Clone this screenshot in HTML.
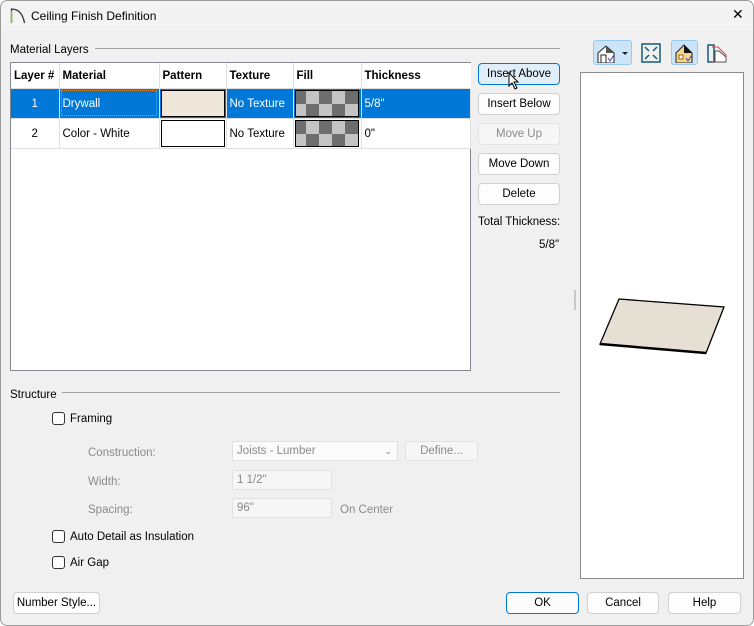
<!DOCTYPE html>
<html><head><style>
*{box-sizing:border-box;margin:0;padding:0}
body{width:754px;height:626px;background:#fff;font-family:"Liberation Sans",sans-serif;font-size:11.5px;color:#000;position:relative;overflow:hidden}
.win{position:absolute;left:0;top:0;width:754px;height:626px;background:#f0f0f0;border-radius:7px;overflow:hidden}
.frame{position:absolute;left:0;top:0;width:754px;height:626px;border:1px solid #9a9a9a;border-radius:7px;pointer-events:none}
.title{position:absolute;left:0;top:0;width:754px;height:31px;background:#f3f3f3}
.a{position:absolute;white-space:nowrap}
.t{margin-top:2px}
.btn{position:absolute;height:22px;background:#fdfdfd;border:1px solid #d0d0d0;border-radius:4px;text-align:center;line-height:21px;font-size:11.5px}
.line{position:absolute;height:1px;background:#a0a0a0}
table{border-collapse:collapse;position:absolute;left:11px;top:63px;background:#fff;table-layout:fixed}
td{border-right:1px solid #e0e0e0;border-bottom:1px solid #e0e0e0;height:29px;padding:1px 3px 0;font-size:11.5px;white-space:nowrap;overflow:hidden}
th{text-align:left;font-weight:bold;height:25px;padding:1px 3px 0;border-right:1px solid #e0e0e0;border-bottom:1px solid #e0e0e0;font-size:11.5px;white-space:nowrap;overflow:hidden}
.sel td{background:#0078d7;color:#fff}
.chk{position:absolute;width:13px;height:13px;border:1px solid #333;border-radius:3px;background:#fff}
.g{color:#8a8a8a}
.box{position:absolute;height:20px;border:1px solid #e0e0e0;background:#f6f6f6;color:#8a8a8a;padding-left:4px;line-height:19px}
.fill{width:64px;height:27px;border:1px solid #000;background:conic-gradient(#c4c4c4 25%,#6e6e6e 0 50%,#c4c4c4 0 75%,#6e6e6e 0) -3px 0/26px 26px}
</style></head><body>
<div class="win">
<div class="title"></div>
<svg class="a" style="left:10px;top:7px" width="16" height="17"><path d="M1.5 16V2 Q12 2 14.5 16" fill="none" stroke="#333" stroke-width="1.3"/><path d="M1.5 16V4" stroke="#8ac232" stroke-width="1.5"/></svg>
<div class="a" style="left:31px;top:9px;font-size:12px">Ceiling Finish Definition</div>
<div class="a" style="left:732px;top:6px;font-size:14px">✕</div>

<div class="a t" style="left:10px;top:42px">Material Layers</div>
<div class="line" style="left:95px;top:48px;width:465px"></div>
<div class="a" style="left:10px;top:62px;width:461px;height:309px;border:1px solid #828790;background:#fff"></div>
<table>
<tr><th style="width:48px">Layer #</th><th style="width:100px">Material</th><th style="width:67px">Pattern</th><th style="width:67px">Texture</th><th style="width:68px">Fill</th><th style="width:109px;border-right:none">Thickness</th></tr>
<tr class="sel"><td style="text-align:center">1</td><td style="outline:1px dotted #e88a2a;outline-offset:-3px">Drywall</td><td style="padding:1px"><div style="height:27px;border:1px solid #000;background:#efe8da"></div></td><td>No Texture</td><td style="padding:1px"><div class="fill"></div></td><td>5/8"</td></tr>
<tr><td style="text-align:center">2</td><td>Color - White</td><td style="padding:1px"><div style="height:27px;border:1px solid #000;background:#fff"></div></td><td>No Texture</td><td style="padding:1px"><div class="fill"></div></td><td>0"</td></tr>
</table>

<div class="btn" style="left:478px;top:63px;width:82px;background:#e0eef9;border-color:#0078d7">Insert Above</div>
<svg class="a" style="left:508px;top:72px" width="12" height="18"><path d="M1 1V14L4 11L7 17L9 16L6 10H10Z" fill="#fff" stroke="#000"/></svg>
<div class="btn" style="left:478px;top:93px;width:82px">Insert Below</div>
<div class="btn g" style="left:478px;top:123px;width:82px;border-color:#e3e3e3;background:#f6f6f6">Move Up</div>
<div class="btn" style="left:478px;top:153px;width:82px">Move Down</div>
<div class="btn" style="left:478px;top:183px;width:82px">Delete</div>
<div class="a t" style="left:478px;top:214px">Total Thickness:</div>
<div class="a t" style="left:539px;top:237px">5/8"</div>

<div class="a" style="left:593px;top:40px;width:39px;height:25px;background:#cce4f7;border:1px solid #99c9ef;border-radius:3px"></div>
<svg class="a" style="left:596px;top:43px" width="34" height="20"><path d="M2 10L10 3L18 10V20H2Z" fill="#fff" stroke="#222"/><path d="M10 3L18 10H10Z" fill="#555"/><rect x="5" y="12" width="5" height="8" fill="#fff" stroke="#222"/><path d="M12 15L14 18L18 12" fill="none" stroke="#4040c0"/><path d="M26 9H32L29 12Z" fill="#222"/></svg>
<svg class="a" style="left:641px;top:43px" width="20" height="20"><rect x="1" y="1" width="18" height="18" fill="none" stroke="#135a7a" stroke-width="1.5"/><path d="M4 4L8 8M16 4L12 8M4 16L8 12M16 16L12 12" stroke="#135a7a" stroke-width="1.5"/></svg>
<div class="a" style="left:671px;top:40px;width:27px;height:25px;background:#cce4f7;border:1px solid #99c9ef;border-radius:3px"></div>
<svg class="a" style="left:674px;top:43px" width="22" height="20"><path d="M2 10L10 2L18 10V20H2Z" fill="#f4d58d" stroke="#222"/><path d="M10 2L18 10H10Z" fill="#111"/><rect x="5" y="12" width="4" height="4" fill="#fff" stroke="#a06000"/><path d="M12 15L14 18L18 12" fill="none" stroke="#4040c0"/></svg>
<svg class="a" style="left:706px;top:43px" width="22" height="20"><path d="M2 2H8V19H2Z" fill="none" stroke="#135a7a" stroke-width="1.5"/><path d="M6 4H12L20 12V19H6" fill="none" stroke="#e04040"/><path d="M9 8H13L20 14V19H9Z" fill="#fff" stroke="#555"/></svg>

<div class="a" style="left:580px;top:72px;width:164px;height:507px;background:#fff;border:1px solid #8a8a8a"></div>
<svg class="a" style="left:596px;top:295px" width="134" height="64"><path d="M23 4L128 12L110 58L4 49Z" fill="#e6e0d4" stroke="#000" stroke-width="1.3"/><path d="M4 49L110 58" stroke="#000" stroke-width="2.5"/></svg>
<div class="a" style="left:574px;top:290px;width:2px;height:20px;background:#c8c8c8"></div>

<div class="a t" style="left:10px;top:387px">Structure</div>
<div class="line" style="left:62px;top:392px;width:498px"></div>
<div class="chk" style="left:52px;top:412px"></div><div class="a t" style="left:70px;top:411px">Framing</div>
<div class="a g t" style="left:88px;top:445px">Construction:</div>
<div class="box" style="left:232px;top:441px;width:166px;background:#fbfbfb">Joists - Lumber<span style="position:absolute;right:5px;font-size:9px">&#8964;</span></div>
<div class="box" style="left:405px;top:441px;width:73px;text-align:center;padding:0;border-radius:3px">Define...</div>
<div class="a g t" style="left:88px;top:474px">Width:</div>
<div class="box" style="left:232px;top:470px;width:100px">1 1/2"</div>
<div class="a g t" style="left:88px;top:502px">Spacing:</div>
<div class="box" style="left:232px;top:498px;width:100px">96"</div>
<div class="a g t" style="left:340px;top:502px">On Center</div>
<div class="chk" style="left:52px;top:530px"></div><div class="a t" style="left:70px;top:529px">Auto Detail as Insulation</div>
<div class="chk" style="left:52px;top:556px"></div><div class="a t" style="left:70px;top:555px">Air Gap</div>

<div class="btn" style="left:13px;top:592px;width:87px">Number Style...</div>
<div class="btn" style="left:506px;top:592px;width:73px;border-color:#0078d7">OK</div>
<div class="btn" style="left:587px;top:592px;width:72px">Cancel</div>
<div class="btn" style="left:668px;top:592px;width:73px">Help</div>
<div class="frame"></div>
</div>
</body></html>
